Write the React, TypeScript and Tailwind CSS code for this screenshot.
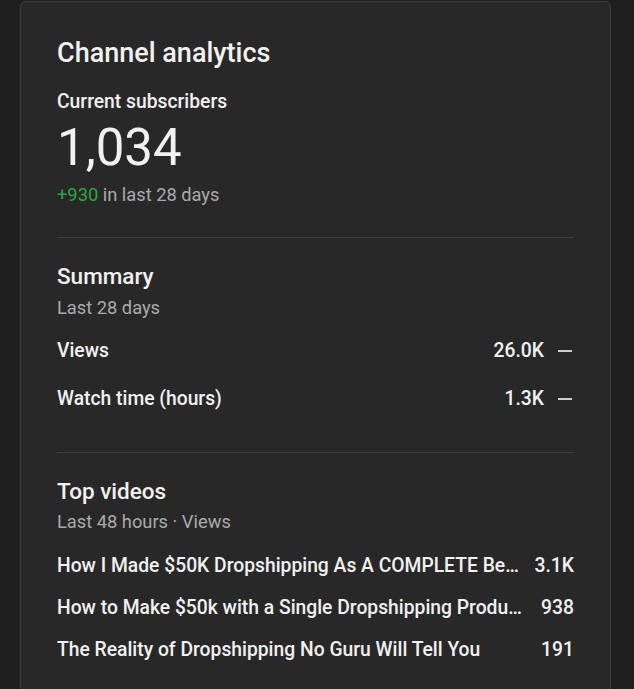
const stats = [
  { label: "Views", value: "26.0K" },
  { label: "Watch time (hours)", value: "1.3K" },
];

const topVideos = [
  { title: "How I Made $50K Dropshipping As A COMPLETE Beginner (Full Guide)", views: "3.1K" },
  { title: "How to Make $50k with a Single Dropshipping Product", views: "938" },
  { title: "The Reality of Dropshipping No Guru Will Tell You", views: "191" },
];

export default function App() {
  return (
    <main
      className="min-h-[689px] bg-[#1f1f1f] pl-[20px] pt-px"
      style={{ fontFamily: "Roboto, 'Noto Sans', sans-serif" }}>
      <div className="min-h-[700px] w-[591px] rounded-t-[6px] border border-[#3e3e3e] bg-[#282828] px-[36px] pt-[35px] text-[#f1f1f1]">
        <h1 className="text-[27px] leading-[32px] font-medium">Channel analytics</h1>

        <p className="mt-[21px] text-[19.3px] leading-[24px] font-medium">Current subscribers</p>
        <p className="mt-[6px] text-[51px] leading-[56px]">1,034</p>
        <p className="mt-[7px] text-[18.3px] leading-[24px] text-[#aaaaaa]">
          <span className="text-[#2ba640]">+930</span> in last 28 days
        </p>

        <div className="mt-[30px] h-px bg-[#3e3e3e]" />

        <h2 className="mt-[24px] text-[22.5px] leading-[28px] font-medium">Summary</h2>
        <p className="mt-[6px] text-[18.3px] leading-[24px] text-[#aaaaaa]">Last 28 days</p>
        <div className="mt-[19px] flex flex-col gap-[24px]">
          {stats.map((s) => (
            <div key={s.label} className="flex items-center justify-between text-[19.3px] leading-[24px] font-medium">
              <span>{s.label}</span>
              <div className="mr-[2px] flex items-center gap-[14px]">
                <span>{s.value}</span>
                <span className="h-[2px] w-[14px] bg-[#d0d0d0]" />
              </div>
            </div>
          ))}
        </div>

        <div className="mt-[41px] h-px bg-[#3e3e3e]" />

        <h2 className="mt-[24px] text-[22.5px] leading-[28px] font-medium">Top videos</h2>
        <p className="mt-[5px] text-[18.3px] leading-[24px] text-[#aaaaaa]">Last 48 hours · Views</p>
        <div className="mt-[20px] flex flex-col gap-[18px]">
          {topVideos.map((v) => (
            <div key={v.title} className="flex items-center gap-[10px] text-[19.3px] leading-[24px] font-medium">
              <span className="min-w-0 flex-1 truncate">{v.title}</span>
              <span className="w-[42px] shrink-0 text-right">{v.views}</span>
            </div>
          ))}
        </div>
      </div>
    </main>
  );
}
